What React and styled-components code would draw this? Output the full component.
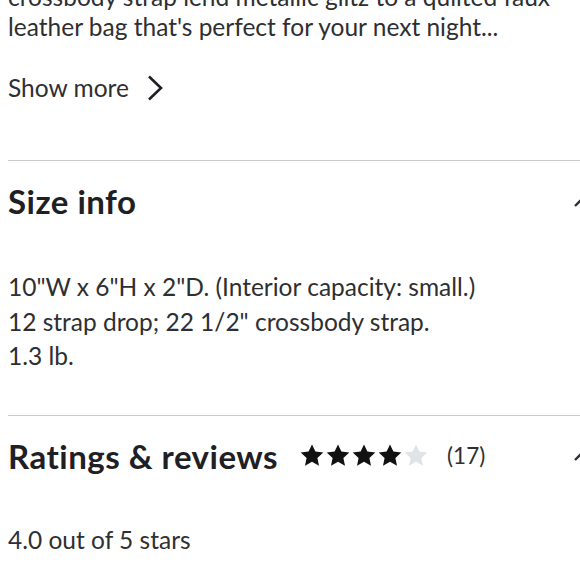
import React from 'react';
import styled, { createGlobalStyle } from 'styled-components';

const GlobalStyle = createGlobalStyle`
  html, body {
    margin: 0;
    padding: 0;
    background: #ffffff;
    overflow: hidden;
  }
  body {
    font-family: Lato, "Noto Sans", "Liberation Sans", sans-serif;
    color: #2e2f32;
  }
`;

const Page = styled.div`
  width: 600px;
  box-sizing: border-box;
  padding: 0 8px;
  margin-top: -18px;
`;

const Section = styled.section`
  padding-bottom: ${props => props.$bottom || 0}px;
  border-bottom: ${props => (props.$divider ? '1px solid #c9cbcf' : 'none')};
`;

const Description = styled.p`
  margin: 0;
  font-size: 24.5px;
  line-height: 30px;
  white-space: nowrap;
`;

const ShowMore = styled.button`
  display: flex;
  align-items: center;
  gap: 18px;
  margin-top: 31px;
  padding: 0;
  border: none;
  background: none;
  font-family: inherit;
  font-size: 24.5px;
  line-height: 30px;
  color: #2e2f32;
  cursor: pointer;
`;

const HeaderRow = styled.div`
  display: flex;
  align-items: center;
  justify-content: space-between;
  padding-top: 22px;
  height: 36px;
`;

const HeaderLeft = styled.div`
  display: flex;
  align-items: center;
  gap: 22px;
`;

const Heading = styled.h2`
  margin: 0;
  font-size: 33px;
  line-height: 36px;
  letter-spacing: 0.5px;
  font-weight: 700;
  color: #1f2023;
`;

const Stars = styled.div`
  display: flex;
  align-items: center;
  gap: 2px;
`;

const Count = styled.span`
  margin-left: 17px;
  font-size: 22.5px;
  color: #2e2f32;
`;

const Body = styled.div`
  margin-top: 51px;
  font-size: 24.5px;
  line-height: ${props => props.$lh || 30}px;
`;

const Line = styled.div``;

const Star = ({ filled }) => (
  <svg width="24" height="23" viewBox="0 0 24 23">
    <path
      d="M12 0.5l3.4 7.1 7.9 0.9-5.9 5.4 1.6 7.8L12 17.8l-7 3.9 1.6-7.8L0.7 8.5l7.9-0.9z"
      fill={filled ? '#111' : '#e1e4e7'}
    />
  </svg>
);

const ChevronUp = () => (
  <svg width="18" height="11" viewBox="0 0 18 11" fill="none">
    <path d="M1 10L9 2l8 8" stroke="#2e2f32" strokeWidth="2.4" />
  </svg>
);

const ChevronRight = () => (
  <svg width="16" height="26" viewBox="0 0 16 26" fill="none">
    <path d="M2 1.5L14 13 2 24.5" stroke="#1f2023" strokeWidth="2.6" />
  </svg>
);

const App = () => (
  <>
    <GlobalStyle />
    <Page>
      <Section $divider $bottom={57}>
        <Description>
          crossbody strap lend metallic glitz to a quilted faux
          <br />
          leather bag that's perfect for your next night...
        </Description>
        <ShowMore>
          Show more
          <ChevronRight />
        </ShowMore>
      </Section>

      <Section $divider $bottom={41}>
        <HeaderRow>
          <Heading>Size info</Heading>
          <ChevronUp />
        </HeaderRow>
        <Body $lh={34.5}>
          <Line>10"W x 6"H x 2"D. (Interior capacity: small.)</Line>
          <Line>12 strap drop; 22 1/2" crossbody strap.</Line>
          <Line>1.3 lb.</Line>
        </Body>
      </Section>

      <Section>
        <HeaderRow>
          <HeaderLeft>
            <Heading>Ratings &amp; reviews</Heading>
            <Stars>
              {[1, 2, 3, 4, 5].map(n => (
                <Star key={n} filled={n <= 4} />
              ))}
              <Count>(17)</Count>
            </Stars>
          </HeaderLeft>
          <ChevronUp />
        </HeaderRow>
        <Body>4.0 out of 5 stars</Body>
      </Section>
    </Page>
  </>
);

export default App;
